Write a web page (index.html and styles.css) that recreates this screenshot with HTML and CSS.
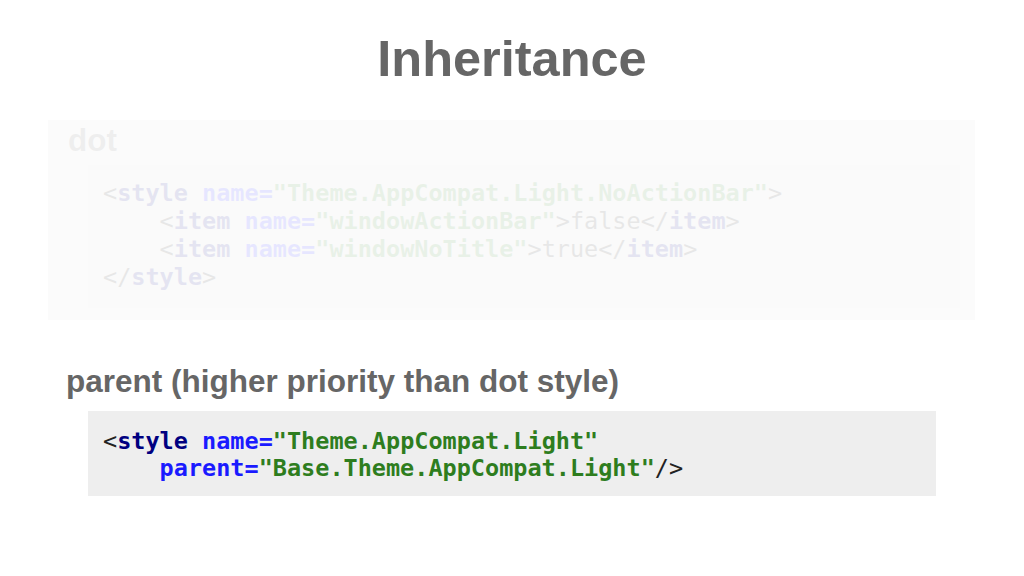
FILE: index.html
```html
<!DOCTYPE html>
<html>
<head>
<meta charset="utf-8">
<link rel="stylesheet" href="styles.css">
</head>
<body>
<div class="slide">
  <h1 class="title">Inheritance</h1>
  <section class="dim-section">
    <h2 class="label">dot</h2>
    <pre class="code code-dim"><span class="p">&lt;</span><span class="tag">style</span> <span class="attr">name=</span><span class="str">"Theme.AppCompat.Light.NoActionBar"</span><span class="p">&gt;</span>
    <span class="p">&lt;</span><span class="tag">item</span> <span class="attr">name=</span><span class="str">"windowActionBar"</span><span class="p">&gt;false&lt;/</span><span class="tag">item</span><span class="p">&gt;</span>
    <span class="p">&lt;</span><span class="tag">item</span> <span class="attr">name=</span><span class="str">"windowNoTitle"</span><span class="p">&gt;true&lt;/</span><span class="tag">item</span><span class="p">&gt;</span>
<span class="p">&lt;/</span><span class="tag">style</span><span class="p">&gt;</span></pre>
  </section>
  <section class="main-section">
    <h2 class="label">parent (higher priority than dot style)</h2>
    <pre class="code code-main"><span class="p">&lt;</span><span class="tag">style</span> <span class="attr">name=</span><span class="str">"Theme.AppCompat.Light"</span>
    <span class="attr">parent=</span><span class="str">"Base.Theme.AppCompat.Light"</span><span class="p">/&gt;</span></pre>
  </section>
</div>
</body>
</html>
```
FILE: styles.css
```css
html, body {
  margin: 0;
  padding: 0;
  background: #ffffff;
}
.slide {
  width: 1024px;
  height: 576px;
  display: flex;
  flex-direction: column;
  font-family: "Liberation Sans", Arial, sans-serif;
}
.title {
  margin: 30px 0 0 0;
  text-align: center;
  font-size: 50.5px;
  font-weight: bold;
  color: #666666;
  line-height: 58px;
}
.label {
  margin: 0;
  font-size: 31.5px;
  font-weight: bold;
  color: #666666;
  line-height: 36px;
}
.dim-section {
  margin: 32px 49px 0 48px;
  height: 200px;
  box-sizing: border-box;
  padding: 2px 0 0 20px;
  background: #e2e2e2;
  opacity: 0.1;
}
.code {
  margin: 0;
  font-family: "DejaVu Sans Mono", "Liberation Mono", monospace;
  font-size: 23.5px;
  line-height: 28px;
  color: #222222;
}
.code-dim {
  margin: 7px 15px 0 20px;
  padding: 14px 15px 17px 15px;
  background: #d0d0d0;
}
.main-section {
  margin: 43px 0 0 66px;
}
.code-main {
  margin: 12px 88px 0 22px;
  padding: 17px 15px 14px 15px;
  background: #eeeeee;
  line-height: 27px;
}
.tag {
  color: #000080;
  font-weight: bold;
}
.attr {
  color: #1a1aff;
  font-weight: bold;
}
.str {
  color: #2e7d1e;
  font-weight: bold;
}
.p {
  color: #222222;
}
```
